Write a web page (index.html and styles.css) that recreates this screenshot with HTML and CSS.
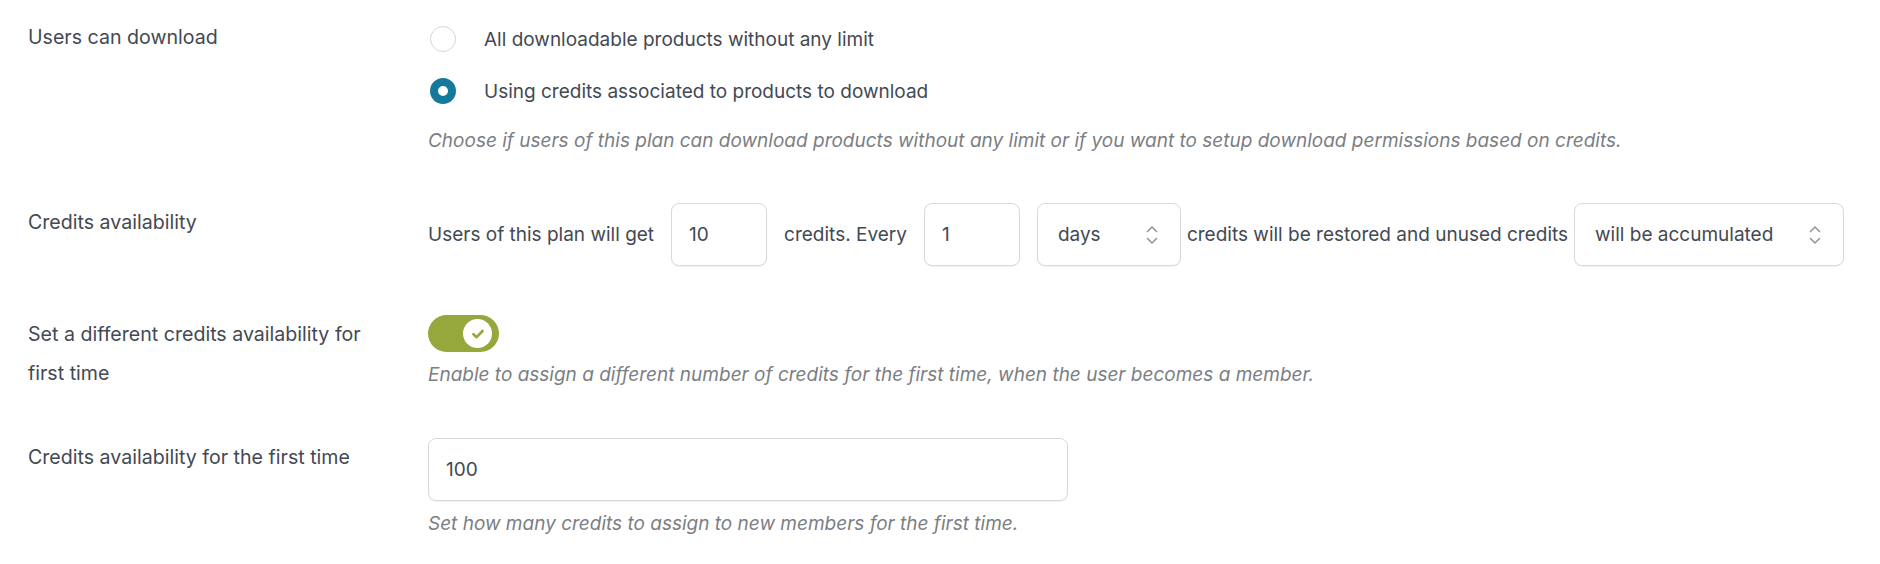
FILE: index.html
```html
<!DOCTYPE html>
<html lang="en">
<head>
    <meta charset="UTF-8">
    <meta name="viewport" content="width=device-width, initial-scale=1.0">
    <title>Plan Download Options</title>
    <link rel="stylesheet" href="styles.css">
</head>
<body>
    <div class="options">
        <div class="row">
            <div class="row-label">Users can download</div>
            <div class="row-field">
                <div class="radio-list">
                    <label class="radio-option">
                        <span class="radio"></span>
                        <span>All downloadable products without any limit</span>
                    </label>
                    <label class="radio-option">
                        <span class="radio checked"></span>
                        <span>Using credits associated to products to download</span>
                    </label>
                </div>
                <p class="description description-radio">Choose if users of this plan can download products without any limit or if you want to setup download permissions based on credits.</p>
            </div>
        </div>

        <div class="row row-credits">
            <div class="row-label">Credits availability</div>
            <div class="row-field inline-field">
                <span class="inline-text">Users of this plan will get</span>
                <input type="text" class="text-input small-input" value="10">
                <span class="inline-text">credits. Every</span>
                <input type="text" class="text-input small-input" value="1">
                <div class="select-wrap select-days">
                    <select class="select-input">
                        <option>days</option>
                    </select>
                    <svg class="select-arrows" width="14" height="20" viewBox="0 0 14 20"><path d="M2.5 6.5 7 2l4.5 4.5M2.5 13.5 7 18l4.5-4.5" fill="none" stroke="#8d939c" stroke-width="1.5" stroke-linecap="round" stroke-linejoin="round"/></svg>
                </div>
                <span class="inline-text">credits will be restored and unused credits</span>
                <div class="select-wrap select-mode">
                    <select class="select-input">
                        <option>will be accumulated</option>
                    </select>
                    <svg class="select-arrows" width="14" height="20" viewBox="0 0 14 20"><path d="M2.5 6.5 7 2l4.5 4.5M2.5 13.5 7 18l4.5-4.5" fill="none" stroke="#8d939c" stroke-width="1.5" stroke-linecap="round" stroke-linejoin="round"/></svg>
                </div>
            </div>
        </div>

        <div class="row">
            <div class="row-label">Set a different credits availability for first time</div>
            <div class="row-field">
                <span class="toggle">
                    <span class="toggle-knob">
                        <svg width="16" height="16" viewBox="0 0 16 16"><path d="M3.4 8.2 6.6 11.2 12.6 5" fill="none" stroke="#96a83b" stroke-width="2.6" stroke-linecap="round" stroke-linejoin="round"/></svg>
                    </span>
                </span>
                <p class="description">Enable to assign a different number of credits for the first time, when the user becomes a member.</p>
            </div>
        </div>

        <div class="row">
            <div class="row-label">Credits availability for the first time</div>
            <div class="row-field">
                <input type="text" class="text-input wide-input" value="100">
                <p class="description">Set how many credits to assign to new members for the first time.</p>
            </div>
        </div>
    </div>
</body>
</html>
```

FILE: styles.css
```css
body {
    margin: 0;
    padding: 18px 28px 0;
    background-color: #fff;
    font-family: Inter, "Noto Sans", sans-serif;
    color: #434953;
}
.row {
    display: grid;
    grid-template-columns: 400px 1fr;
    margin-bottom: 45px;
}
.row-credits {
    margin-bottom: 49px;
}
.row-label {
    font-size: 19.6px;
    line-height: 39px;
    padding-right: 40px;
}
.row-field {
    font-size: 19px;
}
.radio-list {
    display: flex;
    flex-direction: column;
    gap: 10px;
}
.radio-option {
    display: flex;
    align-items: center;
    height: 42px;
    gap: 28px;
}
.radio {
    box-sizing: border-box;
    width: 26px;
    height: 26px;
    margin-left: 2px;
    border: 1px solid #d3d7dc;
    border-radius: 50%;
    background: #fff;
}
.radio.checked {
    border: 8px solid #14799b;
}
.description {
    margin: 6px 0 0;
    font-size: 19px;
    line-height: 34px;
    font-style: italic;
    color: #7b7e83;
}
.description-radio {
    margin-top: 12px;
}
.inline-field {
    display: flex;
    align-items: center;
}
.text-input,
.select-input {
    box-sizing: border-box;
    height: 63px;
    padding: 0 17px;
    border: 1px solid #d6dadf;
    border-radius: 8px;
    box-shadow: 0 1px 1px rgba(0, 0, 0, 0.05);
    background: #fff;
    font-family: Inter, "Noto Sans", sans-serif;
    font-size: 19px;
    color: #434953;
    outline: none;
}
.small-input {
    width: 96px;
    margin: 0 17px;
}
.wide-input {
    display: block;
    width: 640px;
}
.select-wrap {
    position: relative;
}
.select-input {
    appearance: none;
    -webkit-appearance: none;
    padding-left: 20px;
    width: 100%;
}
.select-days {
    width: 144px;
    margin-right: 6px;
}
.select-mode {
    width: 270px;
    margin-left: 6px;
}
.select-arrows {
    position: absolute;
    right: 22px;
    top: 22px;
    pointer-events: none;
}
.toggle {
    box-sizing: border-box;
    display: flex;
    justify-content: flex-end;
    align-items: center;
    width: 71px;
    height: 37px;
    padding-right: 7px;
    border-radius: 19px;
    background: #96a83b;
}
.toggle-knob {
    display: flex;
    align-items: center;
    justify-content: center;
    width: 29px;
    height: 29px;
    border-radius: 50%;
    background: #fff;
}
```
